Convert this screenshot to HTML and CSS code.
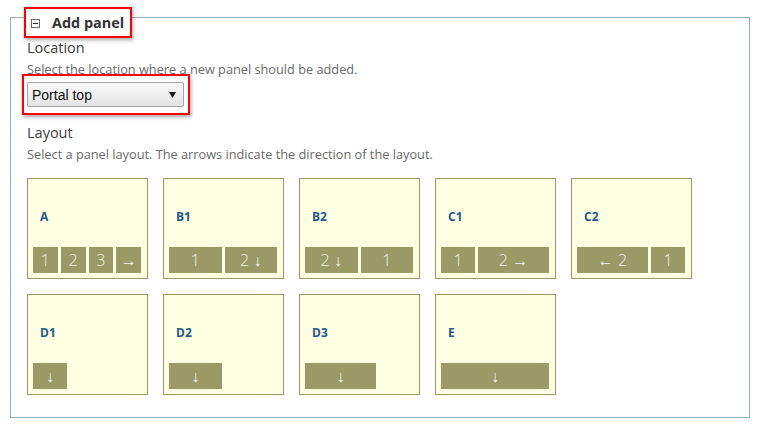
FILE: index.html
```html
<!DOCTYPE html>
<html lang="en">
<head>
<meta charset="utf-8">
<title>Add panel</title>
<link rel="stylesheet" href="styles.css">
</head>
<body>
<div class="page">
  <section class="panel">
    <div class="legend">
      <svg class="toggle" width="9" height="9" viewBox="0 0 9 9" aria-hidden="true">
        <rect x="0.5" y="0.5" width="8" height="8" fill="#fff" stroke="#6b6b6b"/>
        <line x1="2" y1="4.5" x2="7" y2="4.5" stroke="#333" stroke-width="1"/>
      </svg>
      <span class="legend-text">Add panel</span>
    </div>

    <div class="field-label">Location</div>
    <div class="field-desc">Select the location where a new panel should be added.</div>
    <div class="select-mark">
      <div class="select">
        <span class="select-value">Portal top</span>
        <svg class="select-arrow" width="7" height="6" viewBox="0 0 7 6" aria-hidden="true">
          <polygon points="0,0 7,0 3.5,6" fill="#1a1a1a"/>
        </svg>
      </div>
    </div>

    <div class="field-label layout-label">Layout</div>
    <div class="field-desc">Select a panel layout. The arrows indicate the direction of the layout.</div>

    <div class="layouts">
      <div class="card">
        <div class="card-name">A</div>
        <div class="blocks">
          <span class="blk grow">1</span><span class="blk grow">2</span><span class="blk grow">3</span><span class="blk grow">→</span>
        </div>
      </div>
      <div class="card">
        <div class="card-name">B1</div>
        <div class="blocks">
          <span class="blk grow">1</span><span class="blk grow">2 ↓</span>
        </div>
      </div>
      <div class="card">
        <div class="card-name">B2</div>
        <div class="blocks">
          <span class="blk grow">2 ↓</span><span class="blk grow">1</span>
        </div>
      </div>
      <div class="card">
        <div class="card-name">C1</div>
        <div class="blocks">
          <span class="blk third">1</span><span class="blk grow">2 →</span>
        </div>
      </div>
      <div class="card">
        <div class="card-name">C2</div>
        <div class="blocks">
          <span class="blk grow">← 2</span><span class="blk third">1</span>
        </div>
      </div>
      <div class="card">
        <div class="card-name">D1</div>
        <div class="blocks">
          <span class="blk third">↓</span>
        </div>
      </div>
      <div class="card">
        <div class="card-name">D2</div>
        <div class="blocks">
          <span class="blk half">↓</span>
        </div>
      </div>
      <div class="card">
        <div class="card-name">D3</div>
        <div class="blocks">
          <span class="blk twothird">↓</span>
        </div>
      </div>
      <div class="card">
        <div class="card-name">E</div>
        <div class="blocks">
          <span class="blk grow">↓</span>
        </div>
      </div>
    </div>
  </section>
</div>
</body>
</html>
```

FILE: styles.css
```css
html, body {
  margin: 0;
  padding: 0;
  background: #ffffff;
}

body {
  font-family: "Open Sans", "DejaVu Sans", sans-serif;
  color: #3c3c3c;
}

.page {
  padding: 17px 10px 0 10px;
}

.panel {
  box-sizing: border-box;
  width: 740px;
  height: 401px;
  border: 1px solid #8fb0c3;
  padding: 0 16px;
}

.legend {
  display: flex;
  width: fit-content;
  align-items: center;
  box-sizing: border-box;
  height: 31px;
  margin-top: -11px;
  margin-left: -3px;
  padding: 0 6px 0 5px;
  border: 2px solid #ff0000;
  background: #ffffff;
  box-shadow: 1px 2px 4px rgba(0, 0, 0, 0.35);
}

.toggle {
  display: block;
  margin-right: 12px;
  margin-top: 1px;
}

.legend-text {
  font-size: 14.4px;
  font-weight: 700;
  color: #333333;
  line-height: 20px;
}

.field-label {
  font-size: 14.5px;
  line-height: 20px;
  color: #3d3d3d;
}

.layout-label {
  margin-top: 8px;
}

.field-desc {
  font-size: 12.75px;
  line-height: 20px;
  margin-top: 1px;
  color: #6a6a6a;
}

.select-mark {
  width: fit-content;
  margin-top: -5px;
  margin-left: -5px;
  padding: 6px 4px 6px 3px;
  border: 2px solid #ff0000;
  box-shadow: 1px 2px 4px rgba(0, 0, 0, 0.35);
}

.select {
  box-sizing: border-box;
  display: flex;
  align-items: center;
  justify-content: space-between;
  width: 157px;
  height: 25px;
  padding: 0 7px 0 4px;
  border: 1px solid #a5a5a5;
  border-radius: 2px;
  background: linear-gradient(#fbfbfb, #e3e3e3);
  font-family: "Liberation Sans", Arial, sans-serif;
  font-size: 14px;
  color: #111111;
}

.select-arrow {
  display: block;
}

.layouts {
  display: grid;
  grid-template-columns: repeat(5, 121px);
  grid-auto-rows: 101px;
  gap: 15px;
  margin-top: 14px;
}

.card {
  box-sizing: border-box;
  display: flex;
  flex-direction: column;
  border: 1px solid #9b9966;
  background: #ffffe2;
  padding: 30px 6px 5px 5px;
}

.card-name {
  margin-left: 7px;
  font-size: 12px;
  font-weight: 700;
  line-height: 16px;
  color: #225a8c;
}

.blocks {
  display: flex;
  gap: 3px;
  margin-top: auto;
}

.blk {
  display: block;
  height: 26px;
  line-height: 26px;
  background: #9b9966;
  color: #f2f2e6;
  font-family: "Open Sans", "Liberation Sans", sans-serif;
  font-size: 16px;
  font-weight: 300;
  text-align: center;
  white-space: nowrap;
}

.grow { flex: 1 1 0; }
.third { flex: 0 0 34px; }
.half { flex: 0 0 53px; }
.twothird { flex: 0 0 71px; }
```
